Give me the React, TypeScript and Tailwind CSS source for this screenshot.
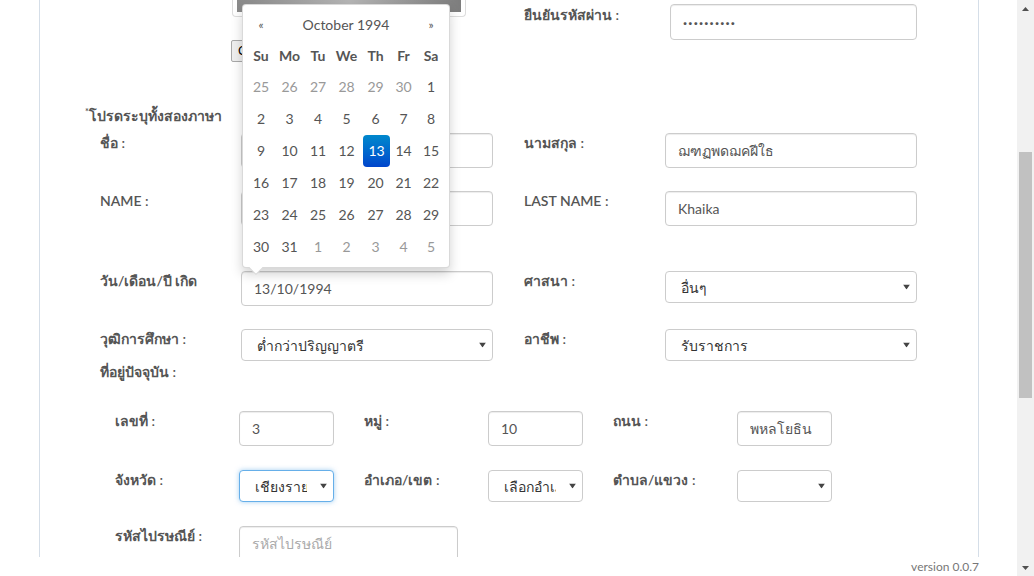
import React from 'react';

const label = 'text-[14px] leading-[20px] text-[#555] font-semibold whitespace-nowrap';
const inputCls =
  'h-[35px] w-full rounded-[4px] border border-[#ccc] bg-white px-3 text-[14px] text-[#555] shadow-[inset_0_1px_1px_rgba(0,0,0,0.075)] outline-none placeholder:text-[#aaa]';

function TextInput({ value, placeholder, className = '' }: { value?: string; placeholder?: string; className?: string }) {
  return <input readOnly className={`${inputCls} ${className}`} defaultValue={value} placeholder={placeholder} />;
}

function Caret() {
  return (
    <svg width="7" height="5" viewBox="0 0 7 5" className="pointer-events-none absolute right-[7px] top-1/2 -translate-y-1/2">
      <path d="M0 0h7L3.5 5z" fill="#444" />
    </svg>
  );
}

function Select({ value, focus, className = '' }: { value: string; focus?: boolean; className?: string }) {
  return (
    <div className={`relative ${className}`}>
      <select
        defaultValue={value}
        className={`h-[32px] w-full appearance-none overflow-hidden rounded-[4px] border bg-white pl-[15px] pr-[26px] text-[14px] text-[#333] outline-none ${
          focus ? 'border-[#66afe9] shadow-[0_0_5px_rgba(102,175,233,0.6)]' : 'border-[#ccc]'
        }`}
      >
        <option value={value}>{value}</option>
      </select>
      <Caret />
    </div>
  );
}

const weeks = [
  [25, 26, 27, 28, 29, 30, 1],
  [2, 3, 4, 5, 6, 7, 8],
  [9, 10, 11, 12, 13, 14, 15],
  [16, 17, 18, 19, 20, 21, 22],
  [23, 24, 25, 26, 27, 28, 29],
  [30, 31, 1, 2, 3, 4, 5],
];

function DatePicker() {
  return (
    <div className="absolute bottom-[calc(100%+3px)] left-[1px] z-10 w-[208px] rounded-[4px] border border-black/15 bg-white p-[4px] shadow-[0_6px_12px_rgba(0,0,0,0.175)]">
      <div className="grid grid-cols-[28px_29px_28px_29px_29px_27px_28px] text-center text-[14px] text-[#555]">
        <div className="h-[31px] text-[12px] leading-[31px]">«</div>
        <div className="col-span-5 h-[31px] leading-[31px]">October 1994</div>
        <div className="h-[31px] text-[12px] leading-[31px]">»</div>
        {['Su', 'Mo', 'Tu', 'We', 'Th', 'Fr', 'Sa'].map((d) => (
          <div key={d} className="h-[31px] font-bold leading-[31px]">
            {d}
          </div>
        ))}
        {weeks.map((w, wi) =>
          w.map((d, di) => {
            const other = (wi === 0 && d > 7) || (wi === 5 && d < 7);
            const active = wi === 2 && d === 13;
            return (
              <div
                key={`${wi}-${di}`}
                className={`h-[32px] leading-[32px] ${other ? 'text-[#999]' : ''} ${
                  active ? 'ml-[2px] rounded-[4px] bg-gradient-to-b from-[#0088cc] to-[#0044cc] text-white' : ''
                }`}
              >
                {d}
              </div>
            );
          })
        )}
      </div>
      <div className="absolute -bottom-[6px] left-[8px] h-[10px] w-[10px] rotate-45 border-b border-r border-black/15 bg-white" />
    </div>
  );
}

function Row({ l1, f1, l2, f2, className = '' }: { l1: React.ReactNode; f1: React.ReactNode; l2: React.ReactNode; f2: React.ReactNode; className?: string }) {
  return (
    <div className={`grid grid-cols-[141px_252px_31px_141px_252px] pl-[60px] ${className}`}>
      <div className={label}>{l1}</div>
      <div>{f1}</div>
      <div />
      <div className={label}>{l2}</div>
      <div>{f2}</div>
    </div>
  );
}

function AddrRow({ items, className = '' }: { items: [string, React.ReactNode][]; className?: string }) {
  return (
    <div className={`grid grid-cols-[124px_95px_30px_124px_95px_30px_124px_95px] pl-[75px] ${className}`}>
      {items.map(([l, f], i) => (
        <React.Fragment key={i}>
          <div className={label}>{l}</div>
          <div>{f}</div>
          {i < items.length - 1 && <div />}
        </React.Fragment>
      ))}
    </div>
  );
}

export default function App() {
  return (
    <div className="flex h-[576px] w-[1034px] overflow-hidden bg-white font-['Lato','Noto_Sans',sans-serif]">
      <div className="flex w-[1017px] flex-col">
        <div className="ml-[39px] h-[557px] w-[940px] overflow-hidden border-x border-[#d5dee8]">
          {/* top row: photo + confirm password */}
          <div className="grid grid-cols-[141px_252px_31px_141px_252px] pl-[60px]">
            <div className="col-span-2 flex flex-col items-start pl-[132px]">
              <div className="h-[17px] w-[234px] rounded-b-[4px] border border-t-0 border-[#ddd] bg-white px-[4px] pb-[4px]">
                <div className="h-full w-full bg-gradient-to-r from-[#8a8a8a] via-[#b5b5b5] to-[#7d7d7d]" />
              </div>
              <button className="ml-[-1px] mt-[23px] h-[22px] rounded-[2px] border border-[#a9a9a9] bg-[#efefef] px-[6px] font-['Liberation_Sans',sans-serif] text-[13px] text-black">
                Choose File
              </button>
            </div>
            <div />
            <div className={`${label} mt-[5px]`}>ยืนยันรหัสผ่าน :</div>
            <div className="mt-[4px] pl-[5px]">
              <TextInput value="··········" className="h-[36px] text-[15px] font-bold tracking-[1.2px] text-[#444]" />
            </div>
          </div>

          <div className="mt-[44px] h-[20px] pl-[45px] text-[14px] leading-[20px] font-semibold text-[#555]">
            <span className="align-top text-[9px] leading-[12px]">*</span>โปรดระบุทั้งสองภาษา
          </div>

          <Row className="mt-[7px]" l1="ชื่อ :" f1={<TextInput value="" />} l2="นามสกุล :" f2={<TextInput value="ฌฑฏพดฌคฝีใธ" />} />
          <Row className="mt-[23px]" l1="NAME :" f1={<TextInput value="" />} l2="LAST NAME :" f2={<TextInput value="Khaika" />} />
          <Row
            className="mt-[45px]"
            l1="วัน/เดือน/ปี เกิด"
            f1={
              <div className="relative">
                <TextInput value="13/10/1994" />
                <DatePicker />
              </div>
            }
            l2="ศาสนา :"
            f2={<Select value="อื่นๆ" />}
          />
          <Row className="mt-[23px]" l1="วุฒิการศึกษา :" f1={<Select value="ต่ำกว่าปริญญาตรี" />} l2="อาชีพ :" f2={<Select value="รับราชการ" />} />

          <div className={`${label} mt-[1px] pl-[60px]`}>ที่อยู่ปัจจุบัน :</div>

          <AddrRow
            className="mt-[29px]"
            items={[
              ['เลขที่ :', <TextInput value="3" />],
              ['หมู่ :', <TextInput value="10" />],
              ['ถนน :', <TextInput value="พหลโยธิน" />],
            ]}
          />
          <AddrRow
            className="mt-[24px]"
            items={[
              ['จังหวัด :', <Select value="เชียงราย" focus />],
              ['อำเภอ/เขต :', <Select value="เลือกอำเภอ" />],
              ['ตำบล/แขวง :', <Select value="" />],
            ]}
          />
          <div className="mt-[24px] grid grid-cols-[124px_219px] pl-[75px]">
            <div className={label}>รหัสไปรษณีย์ :</div>
            <TextInput placeholder="รหัสไปรษณีย์" />
          </div>
        </div>
        <div className="h-[19px] w-[979px] text-right text-[12px] leading-[19px] text-[#777]">version 0.0.7</div>
      </div>

      {/* window scrollbar */}
      <div className="flex w-[17px] flex-col bg-[#f1f1f1]">
        <div className="flex h-[17px] items-center justify-center">
          <svg width="7" height="4" viewBox="0 0 7 4">
            <path d="M3.5 0L7 4H0z" fill="#505050" />
          </svg>
        </div>
        <div className="mx-[2px] mt-[135px] h-[246px] bg-[#c1c1c1]" />
        <div className="flex-1" />
        <div className="flex h-[17px] items-center justify-center">
          <svg width="7" height="4" viewBox="0 0 7 4">
            <path d="M0 0h7L3.5 4z" fill="#505050" />
          </svg>
        </div>
      </div>
    </div>
  );
}
